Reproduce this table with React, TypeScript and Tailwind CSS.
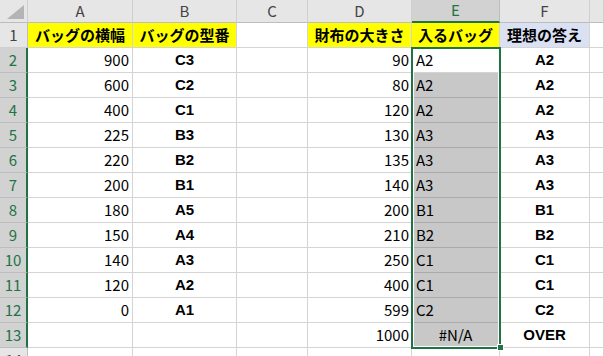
const A = ['900', '600', '400', '225', '220', '200', '180', '150', '140', '120', '0', '']
const B = ['C3', 'C2', 'C1', 'B3', 'B2', 'B1', 'A5', 'A4', 'A3', 'A2', 'A1', '']
const D = ['90', '80', '120', '130', '135', '140', '200', '210', '250', '400', '599', '1000']
const E = ['A2', 'A2', 'A2', 'A3', 'A3', 'A3', 'B1', 'B2', 'C1', 'C1', 'C2', '#N/A']
const F = ['A2', 'A2', 'A2', 'A3', 'A3', 'A3', 'B1', 'B2', 'C1', 'C1', 'C2', 'OVER']

const jp = "font-['Noto_Sans_CJK_JP',sans-serif]"
const bold = "font-['Liberation_Sans',Arial,sans-serif] font-bold"

const colHead = `flex items-center justify-center bg-[#e6e6e6] border-r border-b border-r-[#cfcfcf] border-b-[#bdbdbd] text-[15px] text-[#444] ${jp}`
const rowHead = `flex items-center justify-center bg-[#e6e6e6] border-r border-b border-r-[#bdbdbd] border-b-[#cfcfcf] text-[15px] text-[#444] ${jp}`
const rowHeadSel = `flex items-center justify-center bg-[#d2d2d2] border-r-2 border-b border-r-[#217346] border-b-[#bdbdbd] text-[15px] text-[#217346] ${jp}`
const cell = 'flex items-center border-r border-b border-[#d4d4d4] text-[15px] text-black overflow-hidden whitespace-nowrap'

export default function App() {
  return (
    <div className="w-[604px] h-[356px] overflow-hidden bg-white">
      <div className="relative grid grid-cols-[28px_105px_104px_71px_104px_88px_90px_1fr] grid-rows-[23px_repeat(14,25px)]">
        {/* corner */}
        <div className="relative bg-[#e6e6e6] border-r border-b border-r-[#cfcfcf] border-b-[#bdbdbd]">
          <svg className="absolute right-[3px] bottom-[3px]" width="17" height="14" viewBox="0 0 17 14">
            <polygon points="17,0 17,14 0,14" fill="#b4b4b4" />
          </svg>
        </div>
        <div className={colHead}>A</div>
        <div className={colHead}>B</div>
        <div className={colHead}>C</div>
        <div className={colHead}>D</div>
        <div className={`flex items-center justify-center bg-[#d2d2d2] border-r border-b-2 border-r-[#bdbdbd] border-b-[#217346] text-[15px] text-[#217346] ${jp}`}>E</div>
        <div className={colHead}>F</div>
        <div className={colHead}></div>

        {/* row 1 */}
        <div className={rowHead}>1</div>
        <div className={`${cell} justify-center bg-[#ffff00] ${jp} font-bold`}>バッグの横幅</div>
        <div className={`${cell} justify-center bg-[#ffff00] ${jp} font-bold`}>バッグの型番</div>
        <div className={cell}></div>
        <div className={`${cell} justify-center bg-[#ffff00] ${jp} font-bold`}>財布の大きさ</div>
        <div className={`${cell} justify-center bg-[#ffff00] ${jp} font-bold`}>入るバッグ</div>
        <div className={`${cell} justify-center bg-[#d9e1f2] ${jp} font-bold`}>理想の答え</div>
        <div className={cell}></div>

        {D.map((d, i) => (
          <div key={i} className="contents">
            <div className={rowHeadSel}>{i + 2}</div>
            <div className={`${cell} justify-end pr-[3px] ${jp}`}>{A[i]}</div>
            <div className={`${cell} justify-center ${bold}`}>{B[i]}</div>
            <div className={cell}></div>
            <div className={`${cell} justify-end pr-[2px] ${jp}`}>{d}</div>
            <div
              className={`${cell} ${jp} ${i === 0 ? 'bg-white' : 'bg-[#c8c8c8] border-b-[#ababab]'} ${
                E[i] === '#N/A' ? 'justify-center text-[#333]' : 'justify-start pl-[4px]'
              }`}
            >
              {E[i]}
            </div>
            <div className={`${cell} justify-center ${bold}`}>{F[i]}</div>
            <div className={cell}></div>
          </div>
        ))}

        {/* row 14 */}
        <div className={rowHead}>14</div>
        <div className={cell}></div>
        <div className={cell}></div>
        <div className={cell}></div>
        <div className={cell}></div>
        <div className={cell}></div>
        <div className={cell}></div>
        <div className={cell}></div>

        {/* selection E2:E13 */}
        <div className="absolute left-[411px] top-[47px] w-[90px] h-[302px] border-2 border-[#217346] shadow-[inset_0_0_0_1px_white] pointer-events-none" />
        <div className="absolute left-[497px] top-[344px] w-[7px] h-[7px] bg-[#217346] border border-white" />
      </div>
    </div>
  )
}
